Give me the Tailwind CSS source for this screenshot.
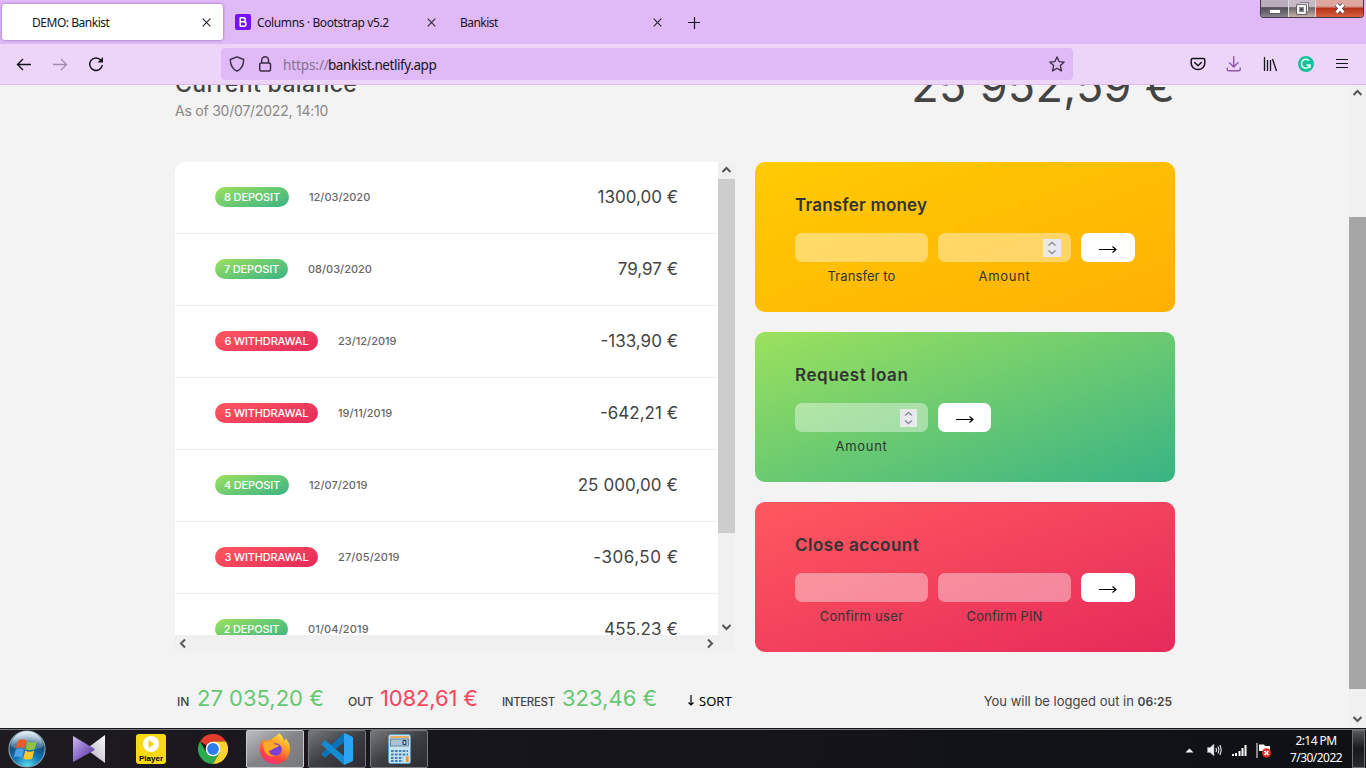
<!DOCTYPE html>
<html lang="en">
<head>
<meta charset="utf-8">
<title>DEMO: Bankist</title>
<script src="https://cdn.jsdelivr.net/npm/@tailwindcss/browser@4"></script>
</head>
<body class="w-[1366px] h-[768px] overflow-hidden flex flex-col bg-[#f3f3f3] font-['Inter',sans-serif] text-[#444]">

<!-- Tab strip -->
<header class="h-11 shrink-0 bg-[#e0baf7] flex items-start font-['Noto_Sans',sans-serif] text-[12px] text-[#15141a]">
  <div class="mt-1 ml-[2px] w-[221px] h-9 bg-white rounded-[3px] shadow-[0_0_3px_rgba(80,40,110,0.6)] flex items-center pl-[30px] pr-3 justify-between">
    <span class="whitespace-nowrap mt-[2px] tracking-[-0.47px]">DEMO: Bankist</span>
    <svg class="w-[9px] h-[9px]" viewBox="0 0 9 9" fill="none" stroke="#2b2433" stroke-width="1.1"><path d="M.7.7l7.6 7.6M8.3.7L.7 8.3"/></svg>
  </div>
  <div class="mt-1 ml-3 w-[202px] h-9 flex items-center">
    <svg class="w-4 h-4" viewBox="0 0 16 16"><rect width="16" height="16" rx="2" fill="#7612f5"/><path d="M5.200 3.500v9M5.200 3.700h3.200a2 2 0 0 1 0 4H5.200M5.200 7.700h3.500a2.300 2.300 0 0 1 0 4.600H5.200" fill="none" stroke="#fff" stroke-width="1.500"/></svg>
    <span class="ml-[6px] mt-[2px] w-[170px] whitespace-nowrap tracking-[-0.38px]">Columns · Bootstrap v5.2</span>
    <svg class="w-[9px] h-[9px] shrink-0" viewBox="0 0 9 9" fill="none" stroke="#2b2433" stroke-width="1.1"><path d="M.7.7l7.6 7.6M8.3.7L.7 8.3"/></svg>
  </div>
  <div class="mt-1 ml-[23px] w-[202px] h-9 flex items-center justify-between">
    <span class="whitespace-nowrap mt-[2px] tracking-[-0.55px]">Bankist</span>
    <svg class="w-[9px] h-[9px]" viewBox="0 0 9 9" fill="none" stroke="#2b2433" stroke-width="1.1"><path d="M.7.7l7.6 7.6M8.3.7L.7 8.3"/></svg>
  </div>
  <svg class="mt-[17px] ml-[26px] w-3 h-3" viewBox="0 0 12 12" fill="none" stroke="#15141a" stroke-width="1.2"><path d="M6.500 0v12M0 5.500h12"/></svg>
  <!-- Window controls -->
  <div class="ml-auto mr-[2px] w-[104px] h-[18px] flex border border-t-0 border-[#45364e] rounded-b-[4px] overflow-hidden">
    <div class="w-[28px] flex justify-center items-center border-r border-[#ddd] bg-linear-to-b from-[#b8adb9] from-40% via-[#504e55] via-45% to-[#88838c]"><span class="mt-[5px] w-[12px] h-[5px] bg-white border border-[#666]"></span></div>
    <div class="w-[27px] flex justify-center items-center border-r border-[#ddd] bg-linear-to-b from-[#c5b9c6] from-40% via-[#6e6669] via-45% to-[#c5b0a8]"><svg class="w-[13px] h-[13px] mb-px" viewBox="0 0 13 13"><path d="M4 2h7.500v7" fill="none" stroke="#554e59" stroke-width="3.2"/><path d="M4 2h7.500v7" fill="none" stroke="#fff" stroke-width="1.4"/><rect x="2" y="4" width="7" height="7" fill="#666" stroke="#554e59" stroke-width="3.4"/><rect x="2" y="4" width="7" height="7" fill="#888" stroke="#fff" stroke-width="1.8"/><rect x="4.500" y="6.500" width="2" height="2" fill="#222"/></svg></div>
    <div class="flex-1 flex justify-center items-center bg-linear-to-b from-[#dda69f] from-35% via-[#b8321a] via-50% to-[#d7603f]"><svg class="w-3 h-[11px]" viewBox="0 0 12 11"><path d="M2.500 1.500l7 8M9.500 1.500l-7 8" stroke="#5a4a58" stroke-width="4.6"/><path d="M2.500 1.500l7 8M9.500 1.500l-7 8" stroke="#fff" stroke-width="2.7"/></svg></div>
  </div>
</header>

<!-- Navigation toolbar -->
<nav class="h-[41px] shrink-0 bg-[#edd5f9] border-b border-[#dfb9f6] flex items-center text-[#15141a]">
  <svg class="ml-4 w-4 h-4" viewBox="0 0 16 16" fill="none" stroke="#15141a" stroke-width="1.4"><path d="M15 8.500H1.500M7 3L1.500 8.500 7 14"/></svg>
  <svg class="ml-5 w-4 h-4" viewBox="0 0 16 16" fill="none" stroke="#a08fab" stroke-width="1.4"><path d="M1 8.500h13.500M9 3l5.500 5.500L9 14"/></svg>
  <svg class="ml-5 w-4 h-4" viewBox="0 0 16 16" fill="none" stroke="#15141a" stroke-width="1.5"><path d="M13 4.300A6.300 6.300 0 1 0 14.300 9"/><path d="M15 1v5.500H9.500z" fill="#15141a" stroke="none"/></svg>
  <div class="ml-[117px] w-[852px] h-8 rounded bg-[#e0baf7] flex items-center font-['Noto_Sans',sans-serif] text-[13.5px]">
    <svg class="ml-2 w-4 h-4" viewBox="0 0 16 16" fill="none" stroke="#3b2e44" stroke-width="1.4" stroke-linejoin="round"><path d="M8 .8l6.700 2.700c0 5-2 9.500-6.700 11.700C3.300 13 1.300 8.500 1.300 3.500z"/></svg>
    <svg class="ml-3 w-4 h-4" viewBox="0 0 16 16" fill="none" stroke="#3b2e44" stroke-width="1.5"><rect x="2.700" y="7" width="10.800" height="8" rx="1.500"/><path d="M4.700 7V4.200a3.400 3.400 0 0 1 6.800 0V7"/></svg>
    <span class="ml-[10px] mt-[2px] w-[45px] tracking-[-0.1px] text-[#86708f] whitespace-nowrap">https://</span><span class="mt-[2px] whitespace-nowrap tracking-[-0.43px]">bankist.netlify.app</span>
    <svg class="ml-auto mr-2 w-4 h-4" viewBox="0 0 16 16" fill="none" stroke="#3b2e44" stroke-width="1.3" stroke-linejoin="round"><path d="M8 .9l2.100 4.700 5.100.5-3.800 3.500 1.100 5.300L8 12.300l-4.500 2.600 1.100-5.300L.8 6.100l5.100-.5z"/></svg>
  </div>
  <svg class="ml-[117px] w-4 h-4" viewBox="0 0 16 16" fill="none" stroke="#15141a" stroke-width="1.5" stroke-linecap="round" stroke-linejoin="round"><path d="M2.700 2.500h10.600a1.500 1.500 0 0 1 1.500 1.500v3.300a6.800 6.300 0 0 1-13.600 0V4a1.500 1.500 0 0 1 1.500-1.500zM4.700 6.500L8 9.700l3.300-3.200"/></svg>
  <svg class="ml-5 w-4 h-4" viewBox="0 0 16 16" fill="none" stroke="#8a58a5" stroke-width="1.4" stroke-linecap="round" stroke-linejoin="round"><path d="M7.700.8v10M3.500 6.800l4.200 4.200 4.200-4.200M1.300 12v1.500a1.300 1.300 0 0 0 1.300 1.300h10.300a1.300 1.300 0 0 0 1.300-1.300V12"/></svg>
  <svg class="ml-5 w-4 h-4" viewBox="0 0 16 16" fill="none" stroke="#15141a" stroke-width="1.3"><path d="M2.500 1v14M5.500 4v11M8.500 4v11M10.500 3l4 12"/></svg>
  <svg class="ml-5 w-4 h-4" viewBox="0 0 16 16"><circle cx="8" cy="8" r="8" fill="#15c39a"/><path d="M11 4.700A4.400 4.400 0 1 0 12 9.200M8.500 9H12v3" fill="none" stroke="#e9fff7" stroke-width="1.5"/></svg>
  <svg class="ml-5 w-4 h-4" viewBox="0 0 16 16" stroke="#15141a" stroke-width="1.2"><path d="M2 3.500h12M2 7.500h12M2 11.500h12"/></svg>
</nav>

<!-- Page viewport -->
<div class="h-[643px] shrink-0 flex overflow-hidden">
  <main class="w-[1349px] pl-[175px] pr-[174px] overflow-hidden">
    <section class="h-[77px] flex justify-between">
      <div class="-mt-4">
        <p class="text-[23px] leading-[31px] font-medium whitespace-nowrap tracking-[0.37px]">Current balance</p>
        <p class="text-[14px] leading-[22px] text-[#888] whitespace-nowrap tracking-[-0.22px]">As of 30/07/2022, 14:10</p>
      </div>
      <p class="-mt-[29px] text-[45px] leading-[60px] whitespace-nowrap tracking-[0.3px]">25 952,59 €</p>
    </section>

    <div class="flex gap-5">
      <!-- Movements -->
      <section class="w-[560px] h-[490px] flex flex-col rounded-tl-[10px] overflow-hidden">
        <div class="h-[473px] flex">
          <div class="w-[543px] h-[473px] bg-white overflow-hidden">
            <div class="h-[72px] border-b border-[#eee] flex items-center pl-10 pr-10 pb-px">
              <span class="w-[74px] h-5 rounded-full bg-linear-[160deg,#9be15d,#39b385] flex justify-center items-center text-white text-[11px] font-medium whitespace-nowrap tracking-[-0.15px]">8 DEPOSIT</span>
              <span class="ml-5 text-[11px] font-medium text-[#666]">12/03/2020</span>
              <span class="ml-auto pt-[2px] text-[17px] whitespace-nowrap">1300,00 €</span>
            </div>
            <div class="h-[72px] border-b border-[#eee] flex items-center pl-10 pr-10 pb-px">
              <span class="w-[73px] h-5 rounded-full bg-linear-[160deg,#9be15d,#39b385] flex justify-center items-center text-white text-[11px] font-medium whitespace-nowrap tracking-[-0.15px]">7 DEPOSIT</span>
              <span class="ml-5 text-[11px] font-medium text-[#666]">08/03/2020</span>
              <span class="ml-auto pt-[2px] text-[17px] whitespace-nowrap">79,97 €</span>
            </div>
            <div class="h-[72px] border-b border-[#eee] flex items-center pl-10 pr-10 pb-px">
              <span class="w-[103px] h-5 rounded-full bg-linear-[160deg,#ff585f,#e52a5a] flex justify-center items-center text-white text-[11px] font-medium whitespace-nowrap tracking-[-0.15px]">6 WITHDRAWAL</span>
              <span class="ml-5 text-[11px] font-medium text-[#666]">23/12/2019</span>
              <span class="ml-auto pt-[2px] text-[17px] whitespace-nowrap">-133,90 €</span>
            </div>
            <div class="h-[72px] border-b border-[#eee] flex items-center pl-10 pr-10 pb-px">
              <span class="w-[103px] h-5 rounded-full bg-linear-[160deg,#ff585f,#e52a5a] flex justify-center items-center text-white text-[11px] font-medium whitespace-nowrap tracking-[-0.15px]">5 WITHDRAWAL</span>
              <span class="ml-5 text-[11px] font-medium text-[#666]">19/11/2019</span>
              <span class="ml-auto pt-[2px] text-[17px] whitespace-nowrap">-642,21 €</span>
            </div>
            <div class="h-[72px] border-b border-[#eee] flex items-center pl-10 pr-10 pb-px">
              <span class="w-[74px] h-5 rounded-full bg-linear-[160deg,#9be15d,#39b385] flex justify-center items-center text-white text-[11px] font-medium whitespace-nowrap tracking-[-0.15px]">4 DEPOSIT</span>
              <span class="ml-5 text-[11px] font-medium text-[#666] tracking-[0.05px]">12/07/2019</span>
              <span class="ml-auto pt-[2px] text-[17px] whitespace-nowrap tracking-[0.1px]">25 000,00 €</span>
            </div>
            <div class="h-[72px] border-b border-[#eee] flex items-center pl-10 pr-10 pb-px">
              <span class="w-[103px] h-5 rounded-full bg-linear-[160deg,#ff585f,#e52a5a] flex justify-center items-center text-white text-[11px] font-medium whitespace-nowrap tracking-[-0.15px]">3 WITHDRAWAL</span>
              <span class="ml-5 text-[11px] font-medium text-[#666] tracking-[0.12px]">27/05/2019</span>
              <span class="ml-auto pt-[2px] text-[17px] whitespace-nowrap tracking-[0.5px] -mr-[0.5px]">-306,50 €</span>
            </div>
            <div class="h-[72px] border-b border-[#eee] flex items-center pl-10 pr-10 pb-px">
              <span class="w-[73px] h-5 rounded-full bg-linear-[160deg,#9be15d,#39b385] flex justify-center items-center text-white text-[11px] font-medium whitespace-nowrap tracking-[-0.15px]">2 DEPOSIT</span>
              <span class="ml-5 text-[11px] font-medium text-[#666] tracking-[0.12px]">01/04/2019</span>
              <span class="ml-auto pt-[2px] text-[17px] whitespace-nowrap tracking-[0.1px]">455,23 €</span>
            </div>
          </div>
          <div class="w-[17px] bg-[#f0f0f0] flex flex-col items-center">
            <svg class="w-[17px] h-[17px] shrink-0" viewBox="0 0 17 17" fill="none" stroke="#555" stroke-width="2"><path d="M4.500 10l4-4 4 4"/></svg>
            <div class="w-full h-[354px] bg-[#cdcdcd]"></div>
            <svg class="mt-auto w-[17px] h-[17px]" viewBox="0 0 17 17" fill="none" stroke="#555" stroke-width="2"><path d="M4.500 7l4 4 4-4"/></svg>
          </div>
        </div>
        <div class="h-[17px] w-[560px] bg-[#f0f0f0] flex justify-between pr-[17px]">
          <svg class="w-[17px] h-[17px]" viewBox="0 0 17 17" fill="none" stroke="#555" stroke-width="2"><path d="M10 4.500l-4 4 4 4"/></svg>
          <svg class="w-[17px] h-[17px]" viewBox="0 0 17 17" fill="none" stroke="#555" stroke-width="2"><path d="M7 4.500l4 4-4 4"/></svg>
        </div>
      </section>

      <!-- Operations -->
      <div class="w-[420px] flex flex-col gap-5 text-[#333]">
        <section class="h-[150px] rounded-[10px] px-10 pt-[30px] bg-linear-[160deg,#ffcb03,#ffb003]">
          <h2 class="text-[17px] leading-[26px] font-semibold whitespace-nowrap tracking-[0.2px]">Transfer money</h2>
          <div class="mt-[15px] flex gap-[10px] text-[13px] leading-[20px] text-center">
            <div class="w-[133px]"><div class="h-[29px] rounded-[7px] bg-white/40"></div><p class="mt-1 tracking-[0.1px]">Transfer to</p></div>
            <div class="w-[133px]"><div class="h-[29px] rounded-[7px] bg-white/40 flex items-center justify-end pr-[10px]"><svg class="w-[18px] h-[18px]" viewBox="0 0 18 18" fill="none" stroke="#8f8f9d" stroke-width="1.5"><path d="M0 0h18v18H0z" fill="#e9e9ed" stroke="none"/><path d="M5.500 6.500L9 3.500l3.500 3M5.500 11.500l3.500 3 3.500-3"/></svg></div><p class="mt-1 tracking-[0.7px]">Amount</p></div>
            <div class="w-[54px] h-[29px] rounded-[7px] bg-white flex items-center justify-center"><svg class="mt-[3px] w-[18px] h-2" viewBox="0 0 18 8" fill="none" stroke="#000" stroke-width="1.2"><path d="M0 4.500h17M13.500 1.500l3.500 3-3.500 3"/></svg></div>
          </div>
        </section>
        <section class="h-[150px] rounded-[10px] px-10 pt-[30px] bg-linear-[160deg,#9be15d,#39b385]">
          <h2 class="text-[17px] leading-[26px] font-semibold whitespace-nowrap tracking-[0.55px]">Request loan</h2>
          <div class="mt-[15px] flex gap-[10px] text-[13px] leading-[20px] text-center">
            <div class="w-[133px]"><div class="h-[29px] rounded-[7px] bg-white/40 flex items-center justify-end pr-[11px]"><svg class="w-[17px] h-[18px]" viewBox="0 0 17 18" fill="none" stroke="#8f8f9d" stroke-width="1.5"><path d="M0 0h17v18H0z" fill="#e9e9ed" stroke="none"/><path d="M5 6.500l3.500-3 3.500 3M5 11.500l3.500 3 3.500-3"/></svg></div><p class="mt-1 tracking-[0.7px]">Amount</p></div>
            <div class="w-[53px] h-[29px] rounded-[7px] bg-white flex items-center justify-center"><svg class="mt-[3px] w-[18px] h-2" viewBox="0 0 18 8" fill="none" stroke="#000" stroke-width="1.2"><path d="M0 4.500h17M13.500 1.500l3.500 3-3.500 3"/></svg></div>
          </div>
        </section>
        <section class="h-[150px] rounded-[10px] px-10 pt-[30px] bg-linear-[160deg,#ff585f,#e52a5a]">
          <h2 class="text-[17px] leading-[26px] font-semibold whitespace-nowrap tracking-[0.5px]">Close account</h2>
          <div class="mt-[15px] flex gap-[10px] text-[13px] leading-[20px] text-center">
            <div class="w-[133px]"><div class="h-[29px] rounded-[7px] bg-white/40"></div><p class="mt-1 tracking-[0.3px]">Confirm user</p></div>
            <div class="w-[133px]"><div class="h-[29px] rounded-[7px] bg-white/40"></div><p class="mt-1 tracking-[0.1px]">Confirm PIN</p></div>
            <div class="w-[54px] h-[29px] rounded-[7px] bg-white flex items-center justify-center"><svg class="mt-[3px] w-[18px] h-2" viewBox="0 0 18 8" fill="none" stroke="#000" stroke-width="1.2"><path d="M0 4.500h17M13.500 1.500l3.500 3-3.500 3"/></svg></div>
          </div>
        </section>
      </div>
    </div>

    <!-- Summary -->
    <footer class="mt-[30px] h-8 flex items-baseline whitespace-nowrap text-[12px] font-medium">
      <p class="ml-[2px] w-[20px]">IN</p>
      <p class="w-[151px] text-[22px] font-normal text-[#66c873]">27 035,20 €</p>
      <p class="w-[32px] tracking-[-0.3px]">OUT</p>
      <p class="w-[122px] text-[22px] font-normal text-[#f5465d] tracking-[-0.15px]">1082,61 €</p>
      <p class="w-[60px] text-[11.5px] tracking-[-0.35px]">INTEREST</p>
      <p class="w-[125px] text-[22px] font-normal text-[#66c873]">323,46 €</p>
      <p class="flex items-baseline gap-1 font-['Noto_Sans',sans-serif] text-[13px] font-normal text-black"><svg class="w-2 h-[11px]" viewBox="0 0 8 11" fill="none" stroke="#000" stroke-width="1.2"><path d="M4 0v10M1.500 7.500L4 10l2.500-2.500"/></svg>SORT</p>
      <p class="ml-auto mr-[3px] font-normal text-[13px]">You will be logged out in <b class="font-semibold text-[12px]">06:25</b></p>
    </footer>
  </main>

  <!-- Page scrollbar -->
  <div class="w-[17px] bg-[#f0f0f0] flex flex-col">
    <svg class="w-[17px] h-[17px] shrink-0" viewBox="0 0 17 17" fill="none" stroke="#555" stroke-width="2"><path d="M4.500 10l4-4 4 4"/></svg>
    <div class="mt-[115px] h-[472px] bg-[#a6a6a6]"></div>
    <svg class="mt-auto w-[17px] h-[17px]" viewBox="0 0 17 17" fill="none" stroke="#555" stroke-width="2"><path d="M4.500 6l4 4 4-4"/></svg>
  </div>
</div>

<!-- Taskbar -->
<div class="h-10 shrink-0 border-t border-[#15161a] bg-linear-to-r from-[#1d1a20] via-[#17151c] via-40% to-[#0d1114] shadow-[inset_0_1px_0_#77777c] flex items-center text-white font-['Noto_Sans',sans-serif]">
  <svg class="ml-[8px] w-[38px] h-[38px]" viewBox="0 0 38 38">
    <defs>
      <radialGradient id="orb" cx=".5" cy="1" r=".95"><stop offset="0" stop-color="#5fe3f5"/><stop offset=".4" stop-color="#1477b5"/><stop offset=".75" stop-color="#15497c"/><stop offset="1" stop-color="#8eb8cf"/></radialGradient>
      <linearGradient id="shine" x2="0" y2="1"><stop stop-color="#fff" stop-opacity=".75"/><stop offset="1" stop-color="#fff" stop-opacity=".12"/></linearGradient>
    </defs>
    <circle cx="19" cy="19" r="18" fill="url(#orb)" stroke="#7e9cab" stroke-width="1.2"/>
    <path d="M3 17a16 16 0 0 1 32 0c-8 4-24 4-32 0z" fill="url(#shine)"/>
    <path d="M10 10.500c3-1.700 5.500-1.600 8.300.1l-2 8c-2.800-1.600-5.300-1.700-8.300-.2z" fill="#ee5a24"/>
    <path d="M19.600 11.300c3 1.700 6 1.500 9-.1l-2 8c-3 1.500-6 1.600-9-.1z" fill="#8cc63e"/>
    <path d="M7.700 19.700c3-1.500 5.500-1.400 8.300.1l-2 8c-2.800-1.600-5.300-1.700-8.300-.1z" fill="#4aa3e8"/>
    <path d="M17.300 20.500c3 1.700 6 1.500 9 0l-2 7.900c-3 1.600-6 1.600-9 0z" fill="#fdc62f"/>
  </svg>
  <svg class="ml-[27px] w-8 h-7" viewBox="0 0 32 28">
    <defs><linearGradient id="kmL" x2="1" y2="1"><stop stop-color="#cdbcf0"/><stop offset=".5" stop-color="#8a6cc8"/><stop offset="1" stop-color="#4f2f9a"/></linearGradient><linearGradient id="kmR" x1="1" x2="0" y2="1"><stop stop-color="#fff"/><stop offset="1" stop-color="#a9a2b8"/></linearGradient></defs>
    <path d="M32 0v28L13 14z" fill="url(#kmR)"/><path d="M0 1l21 12.500q1 1 0 2L0 27z" fill="url(#kmL)"/>
  </svg>
  <div class="ml-[31px] w-[30px] h-[30px] rounded-[3px] bg-[#f8d914] flex flex-col items-center justify-between pt-[2px] overflow-hidden">
    <svg class="w-4 h-4" viewBox="0 0 16 16"><circle cx="8" cy="8" r="8" fill="#fff"/><path d="M5.500 4v8l6-4z" fill="#f5cf0d"/></svg>
    <span class="font-['Liberation_Sans',sans-serif] text-[8px] leading-[10px] font-bold text-black">Player</span>
  </div>
  <svg class="ml-8 w-[30px] h-[30px]" viewBox="0 0 30 30">
    <path d="M15 15L2 7.500A15 15 0 0 1 28 7.500H15z" fill="#e33b2e"/><path d="M15 15L8.500 18.700 2 7.500A15 15 0 0 0 15 30l6.500-11.300z" fill="#2da94f"/><path d="M15 7.500h13A15 15 0 0 1 15 30l6.500-11.300z" fill="#fdd230"/><circle cx="15" cy="15" r="7.300" fill="#fff"/><circle cx="15" cy="15" r="5.900" fill="#2f7de9"/>
  </svg>
  <div class="ml-[18px] w-[58px] h-[38px] rounded-[2px] border border-[#c8c9cb] bg-linear-to-br from-[#bdbec0] via-[#828487] to-[#77797c] flex items-center justify-center">
    <svg class="w-[30px] h-[31px]" viewBox="0 0 30 31">
      <defs><linearGradient id="fx" x1=".8" x2=".3" y2="1"><stop stop-color="#fff04a"/><stop offset=".4" stop-color="#ff9a25"/><stop offset=".75" stop-color="#ff4239"/><stop offset="1" stop-color="#f3318c"/></linearGradient></defs>
      <path d="M19 0c3 2.500 4.500 4.500 5 8 1-.7 1.500-1.700 1.600-2.700 3 3 4.400 6.700 4.400 10.700C30 25 23.300 31 15 31S0 25 0 16c0-4 1-8 3.500-11 .3 1.700.8 2.700 1.800 3.500C7 7 9 6.500 11 7c2-3.500 6-3 8-7z" fill="url(#fx)"/>
      <circle cx="15.500" cy="16.500" r="6.300" fill="#7a3fd8"/><path d="M3 10c4-2 8-2 11 1 1.500.8 3.500.8 5 1-1 2.500-4 2.500-6 4-1.500 1-2.500 2-4.500 1.500 0 3 3 5.500 7 5-6 3-12.500-2-12.500-12.500z" fill="#ffab27"/>
    </svg>
  </div>
  <div class="ml-1 w-[58px] h-[38px] rounded-[2px] border border-[#77797d] bg-linear-to-br from-[#77797c] via-[#3c3e43] to-[#2b2c31] flex items-center justify-center">
    <svg class="w-8 h-8" viewBox="0 0 32 32"><path d="M23 0v9L5 24q-1 .7-2 0l-2-2q-1-1 0-2z" fill="#0873b8"/><path d="M23 32v-9L5 8q-1-.7-2 0L1 10q-1 1 0 2z" fill="#168bd4"/><path d="M23 0l8 3.500q1 .5 1 1.500v22q0 1-1 1.500L23 32z" fill="#2ba5f3"/></svg>
  </div>
  <div class="ml-1 w-[58px] h-[38px] rounded-[2px] border border-[#77797d] bg-linear-to-br from-[#77797c] via-[#3c3e43] to-[#2b2c31] flex items-center justify-center">
    <svg class="w-[23px] h-[30px]" viewBox="0 0 23 30"><rect x=".5" y=".5" width="22" height="29" rx="2" fill="#c5e2f3" stroke="#5c9dca"/><path d="M2 3h19" stroke="#f3a33c" stroke-width="1.600"/><rect x="2.500" y="5" width="18" height="7" fill="#a9c4d6" stroke="#55758e" stroke-width=".8"/><path d="M15 6.500h3v4h-3z" fill="none" stroke="#223d63"/><path d="M3 17h17M3 20.500h17M3 24h12M3 27h12" stroke="#477fae" stroke-width="2.200" stroke-dasharray="2.600 1.300"/><rect x="18" y="22.500" width="2.700" height="5.500" fill="#f39a1f"/></svg>
  </div>
  <svg class="ml-auto w-[9px] h-[5px] mt-[3px]" viewBox="0 0 9 5"><path d="M4.500.5L8.500 4.500h-8z" fill="#fff"/></svg>
  <svg class="ml-[13px] w-[15px] h-[14px] mt-[3px]" viewBox="0 0 15 14" fill="none" stroke="#fff"><path d="M.5 4.500H3L7 1v12L3 9.500H.5z" fill="#eee" stroke="#999" stroke-width=".6"/><path d="M9 5q1 2 0 4M11 3.500q2 3.500 0 7M13 2q2.500 5 0 10"/></svg>
  <svg class="ml-[10px] w-[15px] h-[11px] mt-[3px]" viewBox="0 0 15 11" stroke="#fff" stroke-width="2"><path d="M1 9v2M4 8v3M7.500 6v5M10.500 3v8M13.500 0v11"/></svg>
  <svg class="ml-[9px] w-4 h-[15px] mt-[3px]" viewBox="0 0 16 15"><path d="M1 0v15" stroke="#fff"/><path d="M3 1.500h5l1 1.500h5v6H8L7 8H3z" fill="#fff"/><circle cx="10.500" cy="10" r="4.700" fill="#d72f1f"/><path d="M8.500 8l4 4M12.500 8l-4 4" stroke="#fff" stroke-width="1.600"/></svg>
  <div class="ml-[14px] w-[60px] text-[12px] leading-[17px] text-center whitespace-nowrap tracking-[-0.55px]"><p>2:14 PM</p><p>7/30/2022</p></div>
  <div class="ml-[6px] mr-px w-[13px] h-[38px] border border-[#6d6f73] bg-linear-to-b from-[#55575b] via-[#17181b] to-[#2b2c30]"></div>
</div>
</body>
</html>
